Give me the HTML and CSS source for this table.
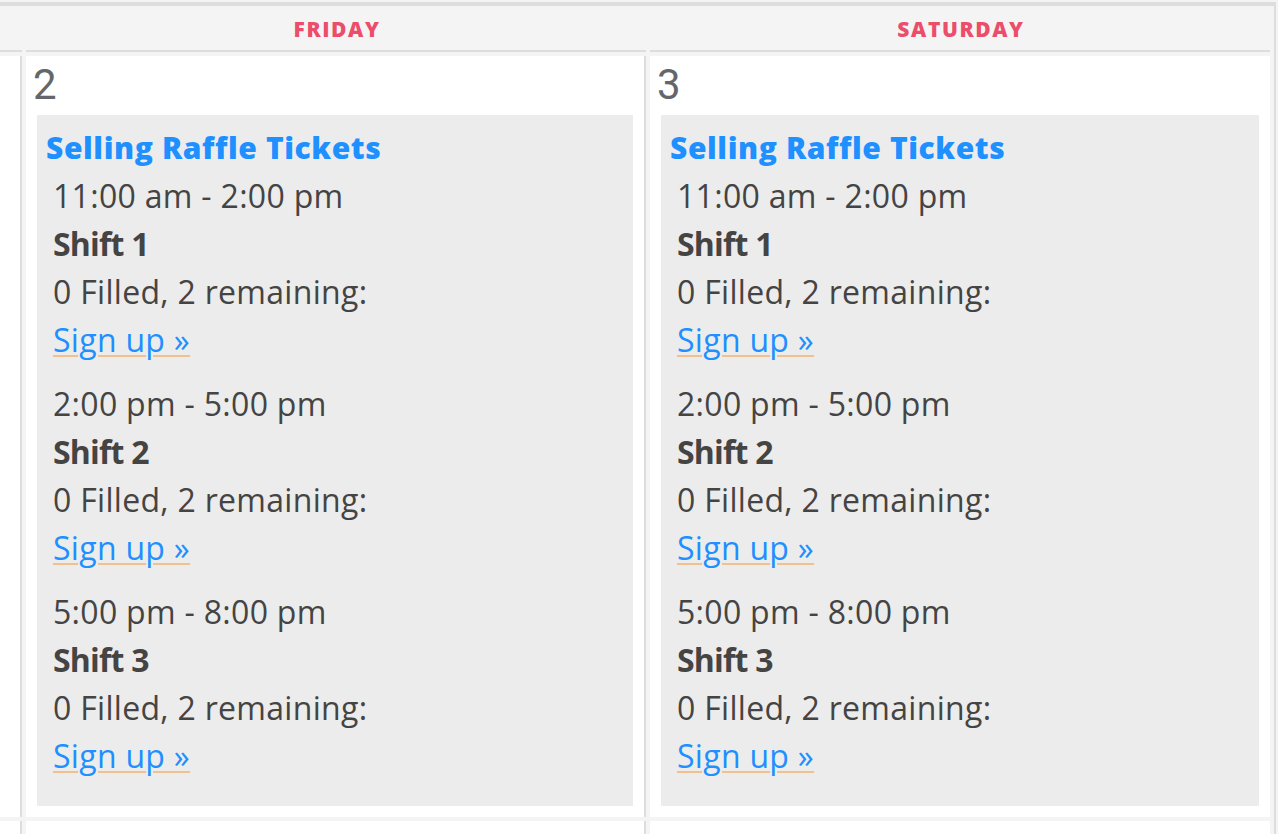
FILE: index.html
```html
<!DOCTYPE html>
<html lang="en">
<head>
<meta charset="utf-8">
<title>Calendar</title>
<link rel="stylesheet" href="styles.css">
</head>
<body>
<div class="calendar">
  <div class="row head-row">
    <div class="head"></div>
    <div class="head">FRIDAY</div>
    <div class="head">SATURDAY</div>
  </div>
  <div class="row day-row">
    <div class="day"></div>
    <div class="day">
      <div class="date">2</div>
      <div class="event">
        <div class="title">Selling Raffle Tickets</div>
        <div class="shift">
          <div class="line">11:00 am - 2:00 pm</div>
          <div class="line strong">Shift 1</div>
          <div class="line">0 Filled, 2 remaining:</div>
          <div class="line"><a class="signup" href="#">Sign up »</a></div>
        </div>
        <div class="shift">
          <div class="line">2:00 pm - 5:00 pm</div>
          <div class="line strong">Shift 2</div>
          <div class="line">0 Filled, 2 remaining:</div>
          <div class="line"><a class="signup" href="#">Sign up »</a></div>
        </div>
        <div class="shift">
          <div class="line">5:00 pm - 8:00 pm</div>
          <div class="line strong">Shift 3</div>
          <div class="line">0 Filled, 2 remaining:</div>
          <div class="line"><a class="signup" href="#">Sign up »</a></div>
        </div>
      </div>
    </div>
    <div class="day">
      <div class="date">3</div>
      <div class="event">
        <div class="title">Selling Raffle Tickets</div>
        <div class="shift">
          <div class="line">11:00 am - 2:00 pm</div>
          <div class="line strong">Shift 1</div>
          <div class="line">0 Filled, 2 remaining:</div>
          <div class="line"><a class="signup" href="#">Sign up »</a></div>
        </div>
        <div class="shift">
          <div class="line">2:00 pm - 5:00 pm</div>
          <div class="line strong">Shift 2</div>
          <div class="line">0 Filled, 2 remaining:</div>
          <div class="line"><a class="signup" href="#">Sign up »</a></div>
        </div>
        <div class="shift">
          <div class="line">5:00 pm - 8:00 pm</div>
          <div class="line strong">Shift 3</div>
          <div class="line">0 Filled, 2 remaining:</div>
          <div class="line"><a class="signup" href="#">Sign up »</a></div>
        </div>
      </div>
    </div>
  </div>
  <div class="row day-row next-row">
    <div class="day"></div>
    <div class="day"></div>
    <div class="day"></div>
  </div>
</div>
</body>
</html>
```

FILE: styles.css
```css
html, body {
  margin: 0;
  padding: 0;
}

body {
  background: #f4f4f4;
  overflow: hidden;
  height: 834px;
  font-family: "Open Sans", "Liberation Sans", sans-serif;
  color: #444;
}

.calendar {
  box-sizing: border-box;
  width: 1276px;
  margin-top: 2px;
  border-top: 4px solid #dddddd;
  border-right: 2px solid #dddddd;
}

.row {
  display: grid;
  grid-template-columns: 22px 620px 620px;
  column-gap: 4px;
  padding-right: 4px;
}

.head {
  background: #f4f4f4;
  border-bottom: 2px solid #dddddd;
  height: 46px;
  box-sizing: border-box;
  padding-top: 2px;
  padding-left: 2px;
  line-height: 42px;
  text-align: center;
  font-size: 21px;
  font-weight: 800;
  letter-spacing: 1.6px;
  color: #ec4d6b;
}

.day-row {
  margin-top: 4px;
}

.day {
  background: #ffffff;
  border-right: 2px solid #dddddd;
  padding: 11px;
  overflow: hidden;
}

.day:first-child {
  padding: 0;
}

.day:last-child {
  border-right: none;
}

.date {
  font-family: Roboto, "Liberation Sans", sans-serif;
  font-size: 42px;
  line-height: 36px;
  height: 36px;
  margin: 0 0 12px -4px;
  color: #63676b;
}

.event {
  background: #ececec;
  padding: 13px 11px 10px 9px;
}

.title {
  font-size: 30px;
  font-weight: 800;
  line-height: 40px;
  letter-spacing: 0.6px;
  color: #1e90ff;
  margin-bottom: 4px;
}

.shift {
  padding-left: 7px;
  margin-bottom: 16px;
}

.line {
  font-size: 32px;
  line-height: 48px;
  letter-spacing: 0.3px;
  color: #444;
}

.strong {
  font-weight: 700;
  letter-spacing: -0.8px;
}

.signup {
  color: #1e90ff;
  text-decoration: underline;
  text-decoration-color: #f0c08f;
  text-decoration-thickness: 2px;
  text-underline-offset: 3px;
}

.next-row .day {
  height: 100px;
}
```
